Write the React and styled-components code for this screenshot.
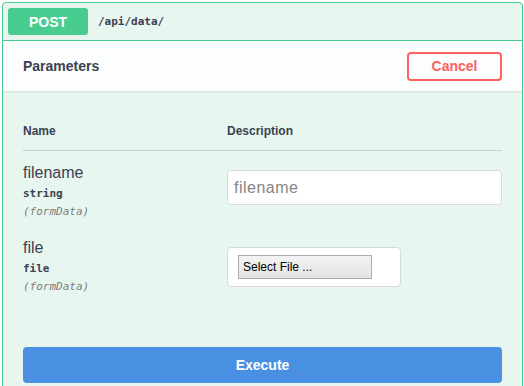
import React from 'react';
import styled, { createGlobalStyle } from 'styled-components';

const Global = createGlobalStyle`
  html, body {
    margin: 0;
    background: #fff;
    font-family: "Liberation Sans", Arial, sans-serif;
    color: #3b4151;
    overflow: hidden;
  }
  * { box-sizing: border-box; }
`;

const Block = styled.div`
  margin: 2px 1px 0 2px;
  min-height: 420px;
  border: 1px solid #49cc90;
  border-radius: 4px;
  background: #e8f6f0;
`;

const Summary = styled.div`
  display: flex;
  align-items: center;
  padding: 5px 5px 5px;
  border-bottom: 1px solid #49cc90;
`;

const Method = styled.span`
  display: flex;
  align-items: center;
  justify-content: center;
  width: 80px;
  height: 27px;
  border-radius: 3px;
  background: #49cc90;
  color: #fff;
  font-weight: 700;
  font-size: 14px;
`;

const Path = styled.span`
  margin-left: 10px;
  font-family: "DejaVu Sans Mono", monospace;
  font-size: 11px;
  font-weight: 700;
  color: #3b4151;
`;

const SectionHeader = styled.div`
  display: flex;
  align-items: center;
  justify-content: space-between;
  height: 50px;
  padding: 0 20px;
  background: rgba(255, 255, 255, 0.85);
  box-shadow: 0 1px 2px rgba(0, 0, 0, 0.1);
`;

const Title = styled.h4`
  margin: 0;
  font-size: 14px;
  font-weight: 700;
`;

const CancelButton = styled.button`
  width: 95px;
  height: 29px;
  border: 2px solid #ff6060;
  border-radius: 4px;
  background: transparent;
  color: #ff6060;
  font-family: inherit;
  font-size: 14px;
  font-weight: 700;
`;

const TableWrap = styled.div`
  padding: 21px 20px 26px;
`;

const Row = styled.div`
  display: grid;
  grid-template-columns: 204px 1fr;
  padding: ${p => (p.$head ? '12px 0' : '13px 0 5px')};
  border-bottom: ${p => (p.$head ? '1px solid #c5d2cc' : 'none')};
`;

const HeadCell = styled.div`
  font-size: 12px;
  font-weight: 700;
  line-height: 14px;
`;

const ParamName = styled.div`
  font-size: 16px;
  line-height: 18px;
`;

const ParamType = styled.div`
  margin-top: 3px;
  font-family: "DejaVu Sans Mono", monospace;
  font-size: 11px;
  font-weight: 700;
  line-height: 18px;
`;

const ParamIn = styled.div`
  font-family: "DejaVu Sans Mono", monospace;
  font-size: 11px;
  font-style: italic;
  line-height: 18px;
  color: #7d7d7d;
`;

const TextInput = styled.input`
  display: block;
  width: 100%;
  height: 35px;
  margin-top: 6px;
  padding: 0 6px;
  border: 1px solid #d9d9d9;
  border-radius: 4px;
  background: #fff;
  font-family: inherit;
  font-size: 16px;
  letter-spacing: 0.5px;
  &::placeholder { color: #858585; }
`;

const FileBox = styled.div`
  width: 174px;
  height: 40px;
  margin-top: 8px;
  padding: 7px 10px;
  border: 1px solid #d9d9d9;
  border-radius: 4px;
  background: #fff;
`;

const FileButton = styled.button`
  display: block;
  width: 134px;
  height: 24px;
  padding: 0 0 0 4px;
  border: 1px solid #adadad;
  border-radius: 0;
  background: linear-gradient(#f3f3f3, #e3e3e3);
  color: #000;
  text-align: left;
  font-family: "Liberation Sans", Arial, sans-serif;
  font-size: 12px;
`;

const ExecuteWrap = styled.div`
  padding: 20px;
`;

const ExecuteButton = styled.button`
  display: block;
  width: 100%;
  height: 36px;
  border: none;
  border-radius: 4px;
  background: #4990e2;
  color: #fff;
  font-family: inherit;
  font-size: 14px;
  font-weight: 700;
`;

const params = [
  { name: 'filename', type: 'string', kind: 'text' },
  { name: 'file', type: 'file', kind: 'file' },
];

export default function App() {
  return (
    <>
      <Global />
      <Block>
        <Summary>
          <Method>POST</Method>
          <Path>/api/data/</Path>
        </Summary>
        <SectionHeader>
          <Title>Parameters</Title>
          <CancelButton>Cancel</CancelButton>
        </SectionHeader>
        <TableWrap>
          <Row $head>
            <HeadCell>Name</HeadCell>
            <HeadCell>Description</HeadCell>
          </Row>
          {params.map(p => (
            <Row key={p.name}>
              <div>
                <ParamName>{p.name}</ParamName>
                <ParamType>{p.type}</ParamType>
                <ParamIn>(formData)</ParamIn>
              </div>
              <div>
                {p.kind === 'text' ? (
                  <TextInput placeholder="filename" />
                ) : (
                  <FileBox>
                    <FileButton>Select File ...</FileButton>
                  </FileBox>
                )}
              </div>
            </Row>
          ))}
        </TableWrap>
        <ExecuteWrap>
          <ExecuteButton>Execute</ExecuteButton>
        </ExecuteWrap>
      </Block>
    </>
  );
}
